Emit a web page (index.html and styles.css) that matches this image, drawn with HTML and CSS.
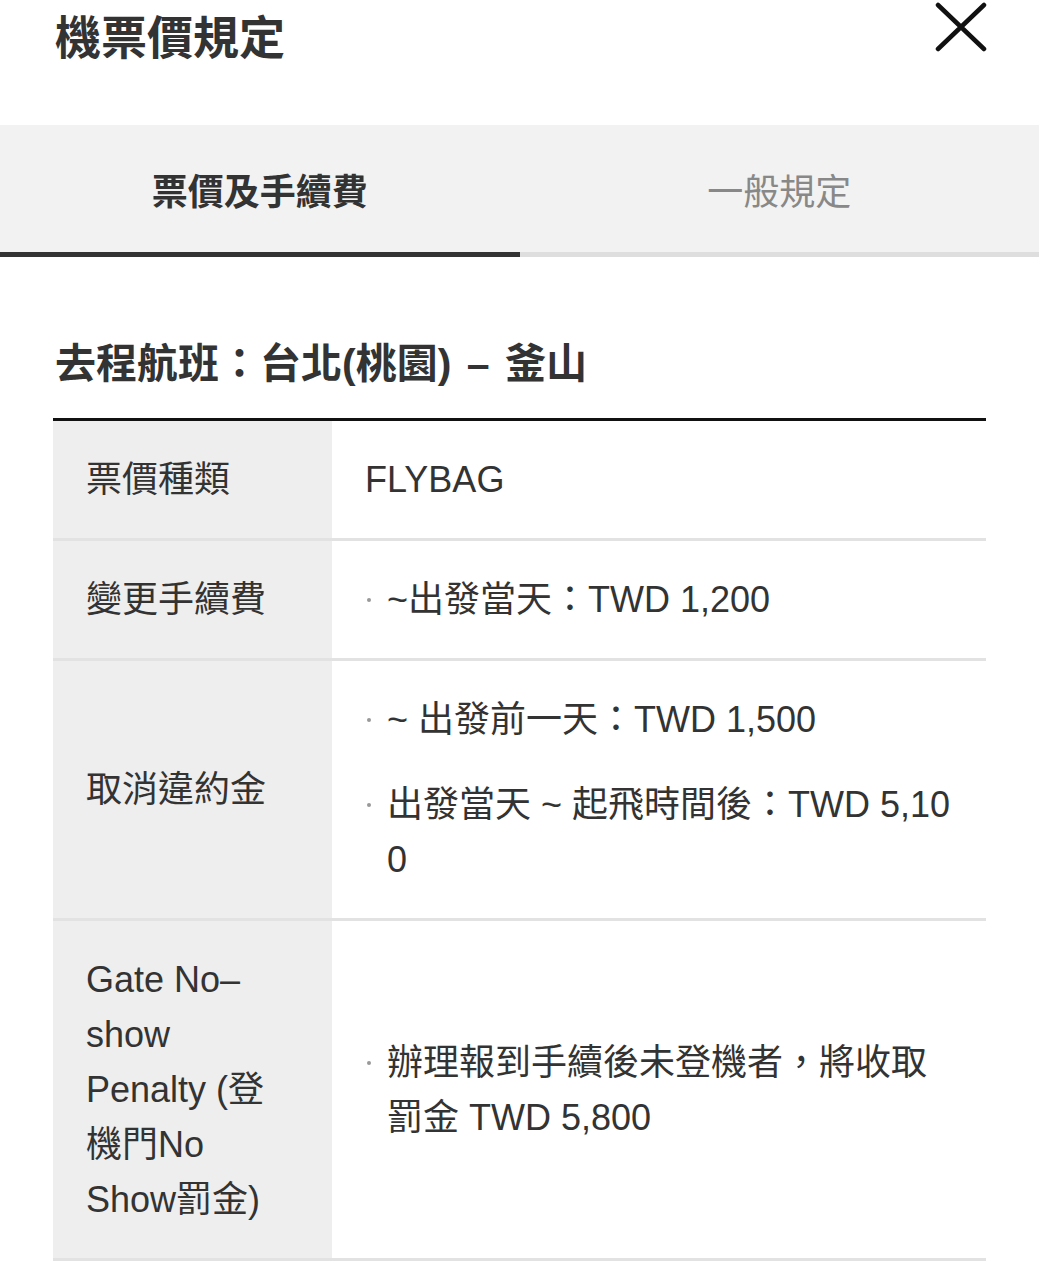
FILE: index.html
```html
<!DOCTYPE html>
<html lang="zh-Hant">

<head>
  <meta charset="UTF-8">
  <meta name="viewport" content="width=device-width, initial-scale=1.0">
  <title>機票價規定</title>
  <link rel="stylesheet" href="styles.css">
</head>

<body>
  <div class="header">
    <div class="title">機票價規定</div>
    <div class="close">
      <svg width="52" height="50" viewBox="0 0 52 50">
        <path d="M3 3 L49 47 M49 3 L3 47" stroke="#111" stroke-width="4.5" stroke-linecap="round" fill="none"/>
      </svg>
    </div>
  </div>

  <div class="tabs">
    <div class="tab active">票價及手續費</div>
    <div class="tab">一般規定</div>
  </div>

  <div class="content">
    <div class="route">去程航班：台北(桃園) – 釜山</div>

    <table class="rules">
      <tr>
        <th>票價種類</th>
        <td>FLYBAG</td>
      </tr>
      <tr>
        <th>變更手續費</th>
        <td>
          <ul>
            <li>~出發當天：TWD 1,200</li>
          </ul>
        </td>
      </tr>
      <tr>
        <th>取消違約金</th>
        <td>
          <ul>
            <li>~ 出發前一天：TWD 1,500</li>
            <li>出發當天 ~ 起飛時間後：TWD 5,100</li>
          </ul>
        </td>
      </tr>
      <tr>
        <th>Gate No–show Penalty (登機門No Show罰金)</th>
        <td>
          <ul>
            <li>辦理報到手續後未登機者，將收取罰金 TWD 5,800</li>
          </ul>
        </td>
      </tr>
    </table>
  </div>
</body>

</html>
```

FILE: styles.css
```css
    body {
      margin: 0;
      background-color: #FFF;
      color: #333;
      font-family: "Liberation Sans", "Noto Sans CJK TC", sans-serif;
    }

    .header {
      display: flex;
      justify-content: space-between;
      align-items: flex-start;
      height: 125px;
      padding: 0 52px 0 55px;
    }

    .title {
      font-size: 46px;
      font-weight: bold;
      line-height: 76px;
      color: #333;
    }

    .close {
      margin-top: 2px;
    }

    .tabs {
      display: flex;
      background-color: #f2f2f2;
    }

    .tab {
      flex: 1;
      height: 127px;
      display: flex;
      justify-content: center;
      align-items: center;
      font-size: 36px;
      color: #888;
      border-bottom: 5px solid #dedede;
    }

    .tab.active {
      font-weight: bold;
      color: #333;
      border-bottom-color: #333;
    }

    .content {
      padding: 79px 53px 0 53px;
    }

    .route {
      font-size: 41px;
      font-weight: bold;
      line-height: 56px;
      padding-left: 2px;
      margin-bottom: 26px;
      word-spacing: 4px;
    }

    .rules {
      width: 100%;
      border-collapse: collapse;
      border-top: 3px solid #111;
      font-size: 36px;
      line-height: 55px;
    }

    .rules tr {
      border-bottom: 3px solid #e2e2e2;
    }

    .rules th {
      width: 213px;
      padding: 31px 33px;
      background-color: #eeeeee;
      font-weight: normal;
      text-align: left;
      vertical-align: middle;
    }

    .rules td {
      padding: 31px 33px;
      vertical-align: middle;
      word-break: break-all;
    }

    ul {
      list-style: none;
      margin: 0;
      padding: 0;
    }

    li {
      display: flex;
    }

    li + li {
      margin-top: 30px;
    }

    li::before {
      content: "";
      flex-shrink: 0;
      width: 4px;
      height: 4px;
      border-radius: 50%;
      background-color: #999;
      margin: 26px 16px 0 2px;
    }
```
